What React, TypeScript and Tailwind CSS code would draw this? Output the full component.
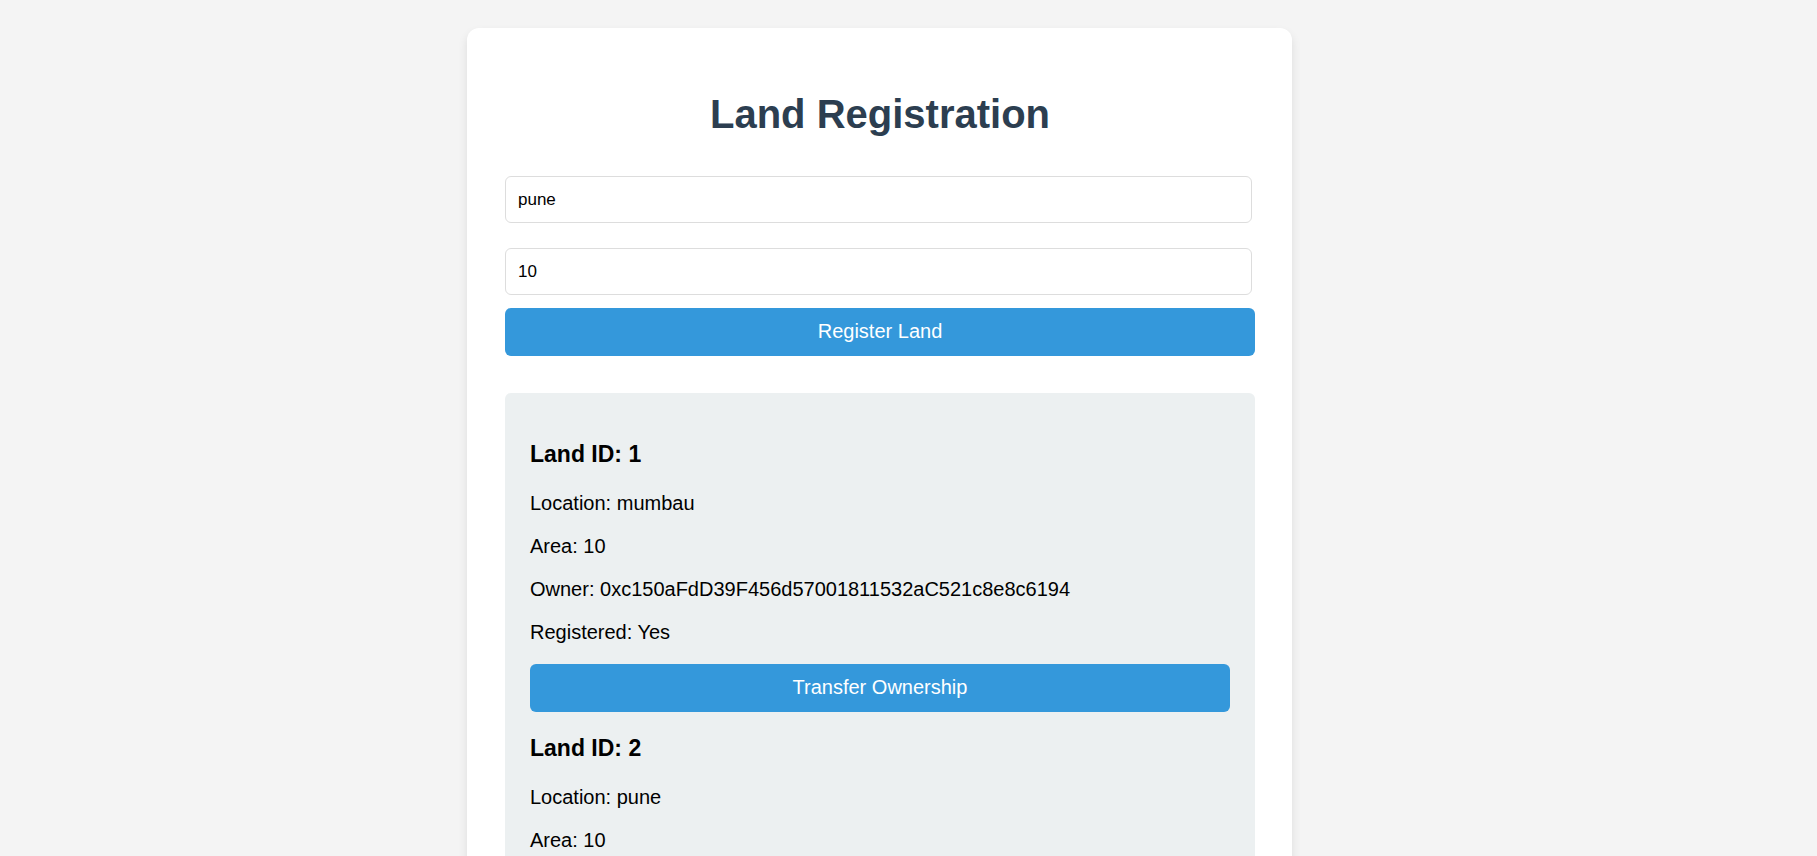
import { useState } from "react";

const buttonClass =
  "block w-full cursor-pointer rounded-md bg-[#3498db] px-5 pt-[11px] pb-[13px] text-center text-xl leading-6 text-white hover:bg-[#2980b9]";
const inputClass =
  "w-[calc(100%-3px)] rounded-md border border-[#dddddd] bg-white p-3 text-[17px] leading-[21px] text-black outline-none focus:border-[#3498db]";

const lands = [
  { id: 1, location: "mumbau", area: 10, owner: "0xc150aFdD39F456d57001811532aC521c8e8c6194" },
  { id: 2, location: "pune", area: 10, owner: "0xc150aFdD39F456d57001811532aC521c8e8c6194" },
];

export default function App() {
  const [location, setLocation] = useState("pune");
  const [area, setArea] = useState("10");

  return (
    <div className="min-h-screen bg-[#f4f4f4] py-7 font-['Liberation_Sans',Arial,sans-serif] text-black xl:pr-[58px]">
      <main className="mx-auto max-w-[825px] rounded-xl bg-white pt-[62px] pr-[37px] pb-10 pl-[38px] shadow-[0_5px_10px_rgba(0,0,0,0.1)]">
        <h1 className="text-center text-[40px] leading-12 font-bold text-[#2c3e50]">Land Registration</h1>
        <form className="mt-[38px]" onSubmit={(e) => e.preventDefault()}>
          <div className="mb-[13px] flex flex-col gap-[25px]">
            <input aria-label="Location" value={location} onChange={(e) => setLocation(e.target.value)} className={inputClass} />
            <input aria-label="Area" value={area} onChange={(e) => setArea(e.target.value)} className={inputClass} />
          </div>
          <button type="submit" className={buttonClass}>Register Land</button>
        </form>
        <section className="mt-[37px] rounded-md bg-[#ecf0f1] px-[25px] pt-12 pb-6">
          {lands.map((land) => (
            <article key={land.id} className="mb-[23px]">
              <h2 className="text-[23px] leading-[27px] font-bold">Land ID: {land.id}</h2>
              <div className="mt-6 mb-5 flex flex-col gap-5 text-xl leading-[23px]">
                <p>Location: {land.location}</p>
                <p>Area: {land.area}</p>
                <p>Owner: {land.owner}</p>
                <p>Registered: Yes</p>
              </div>
              <button type="button" className={buttonClass}>Transfer Ownership</button>
            </article>
          ))}
        </section>
      </main>
    </div>
  );
}
